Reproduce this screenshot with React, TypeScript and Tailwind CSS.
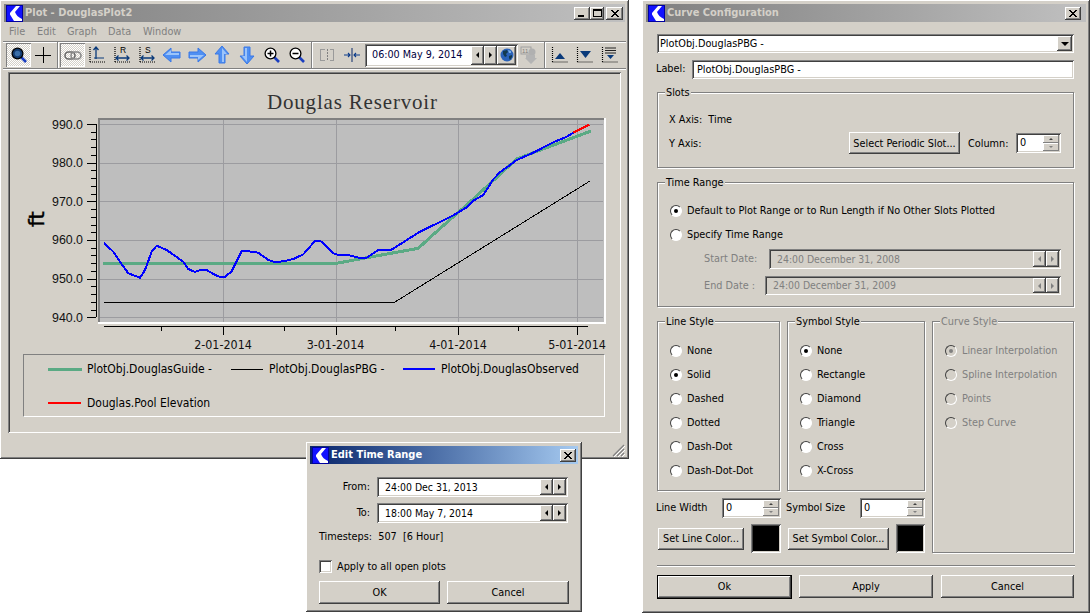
import React from "react";

const raised = "shadow-[inset_-1px_-1px_0_#404040,inset_1px_1px_0_#ffffff,inset_-2px_-2px_0_#808080,inset_2px_2px_0_#d4d0c8]";
const sunken = "shadow-[inset_1px_1px_0_#808080,inset_-1px_-1px_0_#ffffff,inset_2px_2px_0_#404040,inset_-2px_-2px_0_#d4d0c8]";
const thinRaised = "shadow-[inset_-1px_-1px_0_#808080,inset_1px_1px_0_#ffffff]";
const dither = "bg-[repeating-conic-gradient(#ffffff_0%_25%,#d4d0c8_0%_50%)] bg-[length:2px_2px]";

type P = [number, number];
const z3 = (p: P[]) => p.map(([x, y]) => [x / 3, 70 + y / 3] as P);
const z4 = (p: P[]) => p.map(([x, y]) => [310 + x / 3, 90 + y / 3] as P);
const str = (p: P[]) => p.map(([x, y]) => `${x.toFixed(1)},${y.toFixed(1)}`).join(" ");

const blue = str([
  ...z3([[312,519],[340,545],[362,578],[385,610],[420,623],[435,600],[455,545],[470,527],[500,540],[550,575],[565,597],[585,606],[600,600],[620,600],[640,612],[660,621],[675,620],[695,604],[725,543],[740,543],[775,548],[805,570],[825,576],[850,574],[880,567],[910,553],[945,513],[960,512]]),
  ...z4([[20,452],[35,455],[70,490],[90,496],[115,495],[150,504],[170,503],[205,480],[243,480],[325,428],[430,376],[470,352],[490,332],[520,315],[550,268],[570,247],[620,210],[670,188],[730,157],[770,140],[790,128]]),
]);
const red = str(z4([[790,128],[838,104]]));
const green = str([...z3([[309,580]]), ...z4([[80,520],[170,503],[325,475],[385,420],[470,345],[620,207],[665,190],[843,123]])]);

const yVals = [990, 980, 970, 960, 950, 940];
const yOf = (v: number) => 124 + (990 - v) * 3.866;
const minor: number[] = [];
for (let v = 940; v <= 990; v += 2) minor.push(v);
const vGrid = [223, 335.5, 458, 577];
const xLabels = [["2-01-2014", 223], ["3-01-2014", 335.5], ["4-01-2014", 458], ["5-01-2014", 577]] as [string, number][];
const xMinor = [160.5, 283.5, 394.5, 517.5];

function Logo() {
  return (
    <svg width="17" height="17" viewBox="0 0 17 17" className="shrink-0">
      <rect width="17" height="17" fill="#0000a0" />
      <rect x="1" y="1" width="15" height="15" fill="#1212ff" />
      <path d="M14 1 L9 7 C10 10 12 12 16 14 L16 16 L8 16 L4 9.5 L4 8 L10 1 Z" fill="#ffffff" />
    </svg>
  );
}

function CloseX() {
  return (
    <svg width="8" height="7" viewBox="0 0 8 7" shapeRendering="crispEdges">
      <path d="M0 0h2v1h-2zM6 0h2v1h-2zM1 1h2v1h-2zM5 1h2v1h-2zM2 2h4v1h-4zM3 3h2v1h-2zM2 4h4v1h-4zM1 5h2v1h-2zM5 5h2v1h-2zM0 6h2v1h-2zM6 6h2v1h-2z" fill="#000" />
    </svg>
  );
}

function CapButton({ children, w = 16 }: { children: React.ReactNode; w?: number }) {
  return (
    <div style={{ width: w }} className={`h-[13px] bg-[#d4d0c8] flex items-center justify-center ${raised}`}>
      {children}
    </div>
  );
}

function Tri({ dir, color = "#000", size = 3 }: { dir: "l" | "r" | "u" | "d"; color?: string; size?: number }) {
  const s = size;
  const pts =
    dir === "l" ? `${s},0 ${s},${2 * s} 0,${s}` :
    dir === "r" ? `0,0 0,${2 * s} ${s},${s}` :
    dir === "u" ? `${s},0 0,${s} ${2 * s},${s}` :
    `0,0 ${2 * s},0 ${s},${s}`;
  const horiz = dir === "l" || dir === "r";
  return (
    <svg width={horiz ? s : 2 * s} height={horiz ? 2 * s : s} viewBox={`0 0 ${horiz ? s : 2 * s} ${horiz ? 2 * s : s}`}>
      <polygon points={pts} fill={color} />
    </svg>
  );
}

function DateField({ text, width, height, disabled, pad = 6 }: { text: string; width: number; height: number; disabled?: boolean; pad?: number }) {
  const c = disabled ? "#808080" : "#000";
  return (
    <div style={{ width, height }} className={`flex items-center shrink-0 p-[2px] ${disabled ? "bg-[#d4d0c8]" : "bg-white"} ${sunken}`}>
      <span style={{ paddingLeft: pad, color: c }} className="flex-1 whitespace-nowrap text-[10.4px] pt-[1px]">{text}</span>
      <div className={`w-[13px] self-stretch bg-[#d4d0c8] flex items-center justify-center ${raised}`}><Tri dir="l" color={c} /></div>
      <div className={`w-[13px] self-stretch bg-[#d4d0c8] flex items-center justify-center ${raised}`}><Tri dir="r" color={c} /></div>
    </div>
  );
}

function Spin({ width, height = 20, className = "" }: { width: number; height?: number; className?: string }) {
  return (
    <div style={{ width, height }} className={`flex shrink-0 bg-white p-[2px] ${sunken} ${className}`}>
      <span className="flex-1 pl-[2px] pt-[1px] self-center">0</span>
      <div className="w-[16px] flex flex-col">
        <div className={`flex-1 bg-[#d4d0c8] flex items-center justify-center ${thinRaised}`}><Tri dir="u" size={2} color="#404040" /></div>
        <div className={`flex-1 bg-[#d4d0c8] flex items-center justify-center ${thinRaised}`}><Tri dir="d" size={2} color="#808080" /></div>
      </div>
    </div>
  );
}

function Btn({ children, w, h = 22, className = "" }: { children: React.ReactNode; w: number; h?: number; className?: string }) {
  return (
    <div style={{ width: w, height: h }} className={`bg-[#d4d0c8] flex items-center justify-center shrink-0 whitespace-nowrap pt-[1px] ${raised} ${className}`}>
      {children}
    </div>
  );
}

function Radio({ label, checked, disabled }: { label: string; checked?: boolean; disabled?: boolean }) {
  return (
    <div className="h-6 flex items-center gap-[5px]">
      <div className={`w-[12px] h-[12px] rounded-full flex items-center justify-center shrink-0 border border-[#404040] border-r-white border-b-white ${disabled ? "bg-[#d4d0c8]" : "bg-white"}`}>
        {checked && <div className={`w-[4px] h-[4px] rounded-full ${disabled ? "bg-[#808080]" : "bg-black"}`} />}
      </div>
      <span className={`whitespace-nowrap ${disabled ? "text-[#808080]" : ""}`}>{label}</span>
    </div>
  );
}

function Group({ title, w, h, disabled, children, className = "" }: { title: string; w?: number; h: number; disabled?: boolean; children: React.ReactNode; className?: string }) {
  return (
    <div style={{ width: w, height: h }} className={`relative shrink-0 border border-[#808080] shadow-[inset_1px_1px_0_#ffffff,1px_1px_0_#ffffff] ${className}`}>
      <span className={`absolute left-[7px] top-[-7px] bg-[#d4d0c8] px-[1px] leading-[14px] whitespace-nowrap ${disabled ? "text-[#808080]" : ""}`}>{title}</span>
      {children}
    </div>
  );
}

function TitleBar({ title, active, children }: { title: string; active?: boolean; children: React.ReactNode }) {
  return (
    <div className={`h-[18px] flex items-center shrink-0 pl-[2px] pr-[2px] gap-[2px] ${active ? "bg-gradient-to-r from-[#0a246a] to-[#a6caf0] text-white" : "bg-gradient-to-r from-[#808080] to-[#c0c0c0] text-[#d4d0c8]"}`}>
      <Logo />
      <span className="flex-1 font-bold text-[11px] whitespace-nowrap">{title}</span>
      {children}
    </div>
  );
}

/* ---------- toolbar icons ---------- */
function Mag({ kind }: { kind: "solid" | "plus" | "minus" }) {
  return (
    <svg width="16" height="16" viewBox="0 0 16 16">
      <line x1="10" y1="10" x2="15" y2="15" stroke="#1c3fc0" strokeWidth="2.6" />
      <circle cx="6.5" cy="6.5" r="5.4" fill={kind === "solid" ? "#123a6e" : "#ffffff"} stroke="#000" strokeWidth="1.3" />
      {kind === "solid" && <circle cx="6.5" cy="6.5" r="2.8" fill="#3a6ea8" />}
      {kind !== "solid" && <line x1="3.5" y1="6.5" x2="9.5" y2="6.5" stroke="#000" strokeWidth="1.5" />}
      {kind === "plus" && <line x1="6.5" y1="3.5" x2="6.5" y2="9.5" stroke="#000" strokeWidth="1.5" />}
    </svg>
  );
}
function Cross() {
  return (
    <svg width="16" height="16" viewBox="0 0 16 16" shapeRendering="crispEdges">
      <line x1="8" y1="0" x2="8" y2="16" stroke="#000" />
      <line x1="0" y1="8" x2="16" y2="8" stroke="#000" />
    </svg>
  );
}
function Chain() {
  return (
    <svg width="18" height="9" viewBox="0 0 18 9">
      <rect x="1" y="1" width="10" height="7" rx="3.5" fill="none" stroke="#6a6a6a" strokeWidth="1.6" />
      <rect x="7" y="1" width="10" height="7" rx="3.5" fill="none" stroke="#8a8a8a" strokeWidth="1.6" />
    </svg>
  );
}
function Axes({ letter, vertical }: { letter?: string; vertical?: boolean }) {
  return (
    <svg width="18" height="20" viewBox="0 0 18 20">
      <path d="M2 2v15M2 17h15" stroke="#000" strokeDasharray="1 1" fill="none" strokeWidth="1.2" />
      {vertical && <path d="M8 2v12M5.5 5L8 2l2.5 3" stroke="#0a3a7a" strokeWidth="1.3" fill="none" />}
      {vertical && <path d="M6 13h10" stroke="#0a3a7a" strokeWidth="1" />}
      {!vertical && <path d="M3 13h13M5.5 10.5L3 13l2.5 2.5M13.5 10.5L16 13l-2.5 2.5" stroke="#0a3a7a" strokeWidth="1.3" fill="none" />}
      {letter && <text x="7" y="8" fontSize="8.5" fontFamily="Liberation Sans, sans-serif" fill="#000">{letter}</text>}
    </svg>
  );
}
function Arrow({ rot }: { rot: number }) {
  return (
    <svg width="20" height="20" viewBox="0 0 20 20">
      <g transform={`rotate(${rot} 10 10)`}>
        <polygon points="1,10 9,3 9,7 18,7 18,13 9,13 9,17" fill="#4f8ff2" stroke="#3a78e6" strokeWidth="1" />
        <polygon points="3,10 9,5 9,8 17,8 17,10" fill="#9cc4fa" />
      </g>
    </svg>
  );
}
function Split() {
  return (
    <svg width="14" height="12" viewBox="0 0 14 12" shapeRendering="crispEdges">
      <path d="M4.5.5h-4v11h4M9.5.5h4v11h-4" fill="none" stroke="#9a9a9a" />
      <path d="M7 0v12" stroke="#808080" strokeDasharray="2 1" />
    </svg>
  );
}
function Squeeze() {
  return (
    <svg width="18" height="14" viewBox="0 0 18 14">
      <path d="M9 0v14" stroke="#0a2a6a" strokeWidth="1" />
      <path d="M1 7h6M5 5l2 2-2 2M17 7h-6M13 5l-2 2 2 2" stroke="#0a3a8a" strokeWidth="1.1" fill="none" />
    </svg>
  );
}
function Globe() {
  return (
    <svg width="14" height="14" viewBox="0 0 14 14">
      <circle cx="7" cy="7" r="6.5" fill="#2a62b8" />
      <path d="M3 3l4-1 1 2-2 2 1 2-2 1-2-3zM9 8l3-1 0 2-2 3-1-2z" fill="#123a50" />
      <path d="M8 2l3 1 0 2-2 0z" fill="#7ab0e8" />
    </svg>
  );
}
function CalDisabled() {
  return (
    <svg width="20" height="20" viewBox="0 0 20 20">
      <rect x="1" y="2" width="10" height="7" fill="#d4d0c8" stroke="#a0a0a0" />
      <text x="2" y="8" fontSize="6" fill="#808080" fontFamily="Liberation Sans, sans-serif">11</text>
      <circle cx="12" cy="7" r="3.5" fill="#b0b0b0" />
      <path d="M6 10h9v3h2l-6 6-6-6h1z" fill="#b4b4b4" />
    </svg>
  );
}
function Range({ kind }: { kind: "up" | "down" | "list" }) {
  return (
    <svg width="18" height="16" viewBox="0 0 18 16">
      <path d="M1.5 0v15M1.5 15h16" stroke="#000" strokeDasharray="1 1" strokeWidth="1.2" fill="none" />
      {kind === "up" && <polygon points="4,12 14,12 9,6" fill="#0a3a7a" />}
      {kind === "down" && <polygon points="4,4 15,4 9.5,11" fill="#0a3a7a" />}
      {kind === "list" && <path d="M4 1h11M4 3.5h11M4 6h11" stroke="#222" strokeWidth="1" />}
      {kind === "list" && <polygon points="6,8 13,8 9.5,12" fill="#0a3a7a" />}
    </svg>
  );
}

function Tool({ w, pressed, children }: { w: number; pressed?: boolean; children: React.ReactNode }) {
  return (
    <div style={{ width: w }} className={`h-[24px] flex items-center justify-center shrink-0 ${pressed ? `${dither} shadow-[inset_1px_1px_0_#808080,inset_-1px_-1px_0_#ffffff]` : ""}`}>
      {children}
    </div>
  );
}
function Sep({ w }: { w: number }) {
  return (
    <div style={{ width: w }} className="self-stretch flex justify-center shrink-0">
      <div className="w-[2px] border-l border-r border-l-[#808080] border-r-white" />
    </div>
  );
}

function Chart() {
  return (
    <svg width="609" height="278" viewBox="10 74 609 278" className="block shrink-0" fontFamily="'DejaVu Sans Condensed','Liberation Sans',sans-serif">
      <rect x="98" y="119" width="507" height="204" fill="#bebebe" />
      <g shapeRendering="crispEdges">
        {yVals.map(v => <line key={v} x1="99" x2="603" y1={Math.round(yOf(v))} y2={Math.round(yOf(v))} stroke="#9c9ca0" />)}
        {vGrid.map(x => <line key={x} x1={Math.round(x)} x2={Math.round(x)} y1="120" y2="322" stroke="#9c9ca0" />)}
        <path d="M98 119h507" stroke="#808080" strokeWidth="2" />
        <path d="M99 119v203" stroke="#808080" strokeWidth="2" />
        <path d="M98 323h508M605 118v205" stroke="#ffffff" strokeWidth="2" />
        <path d="M96 124v193" stroke="#000" />
        {minor.map(v => {
          const major = v % 10 === 0;
          return <line key={v} x1={major ? 87 : 91} x2="96" y1={Math.round(yOf(v))} y2={Math.round(yOf(v))} stroke="#000" />;
        })}
        <path d="M104 326h484" stroke="#000" />
        {vGrid.map(x => <line key={x} x1={Math.round(x)} x2={Math.round(x)} y1="326" y2="335" stroke="#000" />)}
        {xMinor.map(x => <line key={x} x1={Math.round(x)} x2={Math.round(x)} y1="326" y2="331" stroke="#000" />)}
        <polyline points={green} fill="none" stroke="#5aaa84" strokeWidth="3" />
        <line x1="104" y1="302.5" x2="395" y2="302.5" stroke="#000" />
        <line x1="395" y1="302" x2="590" y2="181" stroke="#000" />
        <polyline points={blue} fill="none" stroke="#0000ff" strokeWidth="2" />
        <polyline points={red} fill="none" stroke="#ff0000" strokeWidth="2" />
      </g>
      {yVals.map(v => <text key={v} x="83" y={yOf(v) + 4.5} textAnchor="end" fontSize="12.4" fontFamily="'Liberation Sans',sans-serif" fill="#111">{v.toFixed(1)}</text>)}
      {xLabels.map(([t, x]) => <text key={t} x={x} y="349" textAnchor="middle" fontSize="12.4" fill="#111">{t}</text>)}
      <text x="352" y="109" textAnchor="middle" fontSize="21" fontFamily="'Liberation Serif',serif" fill="#333" textLength="170">Douglas Reservoir</text>
      <text transform="translate(44 219) rotate(-90)" textAnchor="middle" fontSize="22" fontFamily="'DejaVu Sans',sans-serif" fill="#000" stroke="#000" strokeWidth="0.4">ft</text>
    </svg>
  );
}

function LegendItem({ w, lineW, color, thick, label, gap }: { w?: number; lineW: number; color: string; thick: number; label: string; gap: number }) {
  return (
    <div style={{ width: w, gap }} className="flex items-center shrink-0 h-[14px]">
      <div style={{ width: lineW, height: thick, backgroundColor: color }} />
      <span className="whitespace-nowrap text-[12px]">{label}</span>
    </div>
  );
}

function PlotWindow() {
  const menu: [string, number][] = [["File", 28], ["Edit", 30], ["Graph", 41], ["Data", 35], ["Window", 50]];
  return (
    <div className={`absolute left-0 top-0 w-[629px] h-[459px] bg-[#d4d0c8] p-[4px] flex flex-col ${raised}`}>
      <TitleBar title="Plot - DouglasPlot2">
        <div className="flex items-center">
          <CapButton><div className="w-[6px] h-[2px] bg-black mt-[6px] mr-[2px]" /></CapButton>
          <CapButton w={14}><div className="w-[9px] h-[8px] border border-black border-t-2" /></CapButton>
          <div className="w-[2px]" />
          <CapButton w={17}><CloseX /></CapButton>
        </div>
      </TitleBar>
      <div className="h-[19px] flex items-center pl-[5px] pt-[1px] text-[#808080] shrink-0">
        {menu.map(([m, w]) => <span key={m} style={{ width: w }}>{m}</span>)}
      </div>
      <div className="h-[28px] -mx-[1px] pl-[3px] flex items-center border-y border-y-[#808080] shadow-[inset_0_1px_0_#ffffff,0_1px_0_#ffffff] shrink-0">
        <Tool w={25} pressed><Mag kind="solid" /></Tool>
        <Tool w={24}><Cross /></Tool>
        <Sep w={5} />
        <Tool w={25} pressed><Chain /></Tool>
        <Tool w={24.9}><Axes vertical /></Tool>
        <Tool w={24.9}><Axes letter="R" /></Tool>
        <Tool w={24.9}><Axes letter="S" /></Tool>
        <Tool w={24.9}><Arrow rot={0} /></Tool>
        <Tool w={24.9}><Arrow rot={180} /></Tool>
        <Tool w={24.9}><Arrow rot={90} /></Tool>
        <Tool w={24.9}><Arrow rot={270} /></Tool>
        <Tool w={24.9}><Mag kind="plus" /></Tool>
        <Tool w={24.9}><Mag kind="minus" /></Tool>
        <Sep w={6} />
        <Tool w={23}><Split /></Tool>
        <Tool w={27}><Squeeze /></Tool>
        <div className={`w-[153px] h-[23px] flex items-center bg-white p-[2px] shrink-0 ${sunken}`}>
          <span className="flex-1 pl-[5px] pt-[1px] whitespace-nowrap text-[#000040] text-[10.7px]">06:00 May 9, 2014</span>
          <div className={`w-[13px] self-stretch bg-[#d4d0c8] flex items-center justify-center ${raised}`}><Tri dir="l" /></div>
          <div className={`w-[13px] self-stretch bg-[#d4d0c8] flex items-center justify-center ${raised}`}><Tri dir="r" /></div>
          <div className={`w-[19px] self-stretch bg-[#d4d0c8] flex items-center justify-center ${raised}`}><Globe /></div>
        </div>
        <Tool w={24}><CalDisabled /></Tool>
        <Sep w={6} />
        <Tool w={24}><Range kind="up" /></Tool>
        <Tool w={26}><Range kind="down" /></Tool>
        <Tool w={24}><Range kind="list" /></Tool>
      </div>
      <div className={`mt-[3px] ml-[4px] w-[613px] h-[361px] p-[2px] flex flex-col shrink-0 ${sunken}`}>
        <Chart />
        <div className="mt-[2px] ml-[13px] w-[582px] h-[63px] border border-[#808080] border-r-white border-b-white shrink-0 pl-[24px] pt-[7px] flex flex-col gap-[20px]">
          <div className="flex">
            <LegendItem w={183} lineW={34} thick={3} color="#5aaa84" label="PlotObj.DouglasGuide -" gap={5} />
            <LegendItem w={172} lineW={32} thick={1} color="#000" label="PlotObj.DouglasPBG -" gap={6} />
            <LegendItem lineW={32} thick={2} color="#0000ff" label="PlotObj.DouglasObserved" gap={6} />
          </div>
          <LegendItem lineW={33} thick={2} color="#ff0000" label="Douglas.Pool Elevation" gap={6} />
        </div>
      </div>
      <div className="flex-1 flex justify-end items-end">
        <svg width="13" height="13" viewBox="0 0 13 13" className="mb-[-2px]">
          <path d="M12 1L1 12M12 5L5 12M12 9L9 12" stroke="#808080" strokeWidth="1.2" />
          <path d="M13 2L2 13M13 6L6 13M13 10L10 13" stroke="#fff" strokeWidth="1" />
        </svg>
      </div>
    </div>
  );
}

function EditDialog() {
  return (
    <div className={`absolute left-[306px] top-[442px] w-[276px] h-[170px] bg-[#d4d0c8] p-[4px] flex flex-col ${raised}`}>
      <TitleBar title="Edit Time Range" active>
        <CapButton w={16}><CloseX /></CapButton>
      </TitleBar>
      <div className="px-[9px] flex flex-col">
        <div className="mt-[13px] flex items-center gap-[7px]">
          <span className="w-[51px] text-right pt-[1px]">From:</span>
          <DateField text="24:00 Dec 31, 2013" width={191} height={20} />
        </div>
        <div className="mt-[6px] flex items-center gap-[7px]">
          <span className="w-[51px] text-right pt-[1px]">To:</span>
          <DateField text="18:00 May 7, 2014" width={191} height={20} />
        </div>
        <div className="mt-[7px] h-[14px] leading-[14px] whitespace-pre">{"Timesteps:  507  [6 Hour]"}</div>
        <div className="mt-[16px] h-[13px] flex items-center gap-[5px]">
          <div className={`w-[13px] h-[13px] bg-white shrink-0 ${sunken}`} />
          <span className="pt-[1px]">Apply to all open plots</span>
        </div>
        <div className="mt-[8px] flex gap-[7px]">
          <Btn w={121} h={23}>OK</Btn>
          <Btn w={122} h={23}>Cancel</Btn>
        </div>
      </div>
    </div>
  );
}

function CurveWindow() {
  const line = ["None", "Solid", "Dashed", "Dotted", "Dash-Dot", "Dash-Dot-Dot"];
  const sym = ["None", "Rectangle", "Diamond", "Triangle", "Cross", "X-Cross"];
  const curve = ["Linear Interpolation", "Spline Interpolation", "Points", "Step Curve"];
  return (
    <div className={`absolute left-[642px] top-0 w-[448px] h-[613px] bg-[#d4d0c8] p-[4px] flex flex-col ${raised}`}>
      <TitleBar title="Curve Configuration">
        <CapButton w={16}><CloseX /></CapButton>
        <div className="w-[1px]" />
      </TitleBar>
      <div className="pl-[11px] flex flex-col">
        <div className={`mt-[12px] w-[417px] h-[19px] bg-white p-[2px] flex items-center ${sunken}`}>
          <span className="flex-1 pl-[1px] pt-[1px]">PlotObj.DouglasPBG -</span>
          <div className={`w-[15px] h-[15px] bg-[#d4d0c8] flex items-center justify-center ${raised}`}><Tri dir="d" size={4} /></div>
        </div>
        <div className="mt-[7px] flex items-center">
          <span className="w-[36px] -ml-[1px] shrink-0">Label:</span>
          <div className={`w-[382px] h-[19px] bg-white p-[2px] pl-[5px] pt-[3px] flex items-center ${sunken}`}>PlotObj.DouglasPBG -</div>
        </div>
        <Group title="Slots" w={417} h={76} className="mt-[13px]">
          <div className="mt-[20px] pl-[11px] h-[14px] leading-[14px] whitespace-pre">{"X Axis:  Time"}</div>
          <div className="mt-[4px] pl-[11px] pr-[12px] flex items-center h-[24px]">
            <span className="flex-1 mt-[2px]">Y Axis:</span>
            <Btn w={111} h={22}><span className="mt-[1px]">Select Periodic Slot...</span></Btn>
            <span className="w-[56px] pl-[8px] mt-[2px]">Column:</span>
            <Spin width={45} />
          </div>
        </Group>
        <Group title="Time Range" w={417} h={125} className="mt-[14px]">
          <div className="mt-[16px] pl-[12px]">
            <Radio label="Default to Plot Range or to Run Length if No Other Slots Plotted" checked />
            <Radio label="Specify Time Range" />
          </div>
          <div className="mt-[2px] pl-[46px] flex items-center h-[20px]">
            <span className="w-[65px] text-[#808080] shrink-0 pt-[1px]">Start Date:</span>
            <DateField text="24:00 December 31, 2008" width={292} height={20} disabled />
          </div>
          <div className="mt-[7px] pl-[46px] flex items-center h-[19px]">
            <span className="w-[61px] text-[#808080] shrink-0 pt-[1px]">End Date :</span>
            <DateField text="24:00 December 31, 2009" width={296} height={19} disabled />
          </div>
        </Group>
        <div className="mt-[14px] flex gap-[7px]">
          <div className="flex flex-col w-[268px] shrink-0">
            <div className="flex gap-[7px]">
              <Group title="Line Style" w={123} h={170}>
                <div className="mt-[17px] pl-[12px]">{line.map((l, i) => <Radio key={l} label={l} checked={i === 1} />)}</div>
              </Group>
              <Group title="Symbol Style" w={138} h={170}>
                <div className="mt-[17px] pl-[12px]">{sym.map((l, i) => <Radio key={l} label={l} checked={i === 0} />)}</div>
              </Group>
            </div>
            <div className="mt-[7px] flex items-center h-[20px]">
              <span className="w-[66px] -ml-[1px] shrink-0 pt-[1px]">Line Width</span>
              <Spin width={59} />
              <span className="w-[74px] ml-[5px] shrink-0 pt-[1px]">Symbol Size</span>
              <Spin width={65} />
            </div>
            <div className="mt-[6px] flex items-center h-[29px]">
              <Btn w={86} className="ml-[1px]">Set Line Color...</Btn>
              <div className={`w-[30px] h-[29px] bg-black ml-[7px] shrink-0 ${sunken}`} />
              <Btn w={101} className="ml-[7px]">Set Symbol Color...</Btn>
              <div className={`w-[29px] h-[29px] bg-black ml-[7px] shrink-0 ${sunken}`} />
            </div>
          </div>
          <Group title="Curve Style" w={142} h={232} disabled>
            <div className="mt-[17px] pl-[12px]">{curve.map((l, i) => <Radio key={l} label={l} checked={i === 0} disabled />)}</div>
          </Group>
        </div>
        <div className="mt-[12px] w-[418px] h-[2px] border-t border-t-[#808080] border-b border-b-white" />
        <div className="mt-[8px] flex">
          <Btn w={135} h={24} className="border border-black">Ok</Btn>
          <Btn w={134} h={23} className="ml-[7px]">Apply</Btn>
          <Btn w={133} h={23} className="ml-[8px]">Cancel</Btn>
        </div>
      </div>
    </div>
  );
}

export default function App() {
  return (
    <div className="relative w-[1090px] h-[614px] overflow-hidden bg-white text-[10.8px] text-black font-['DejaVu_Sans_Condensed','Noto_Sans',sans-serif]">
      <PlotWindow />
      <EditDialog />
      <CurveWindow />
    </div>
  );
}
